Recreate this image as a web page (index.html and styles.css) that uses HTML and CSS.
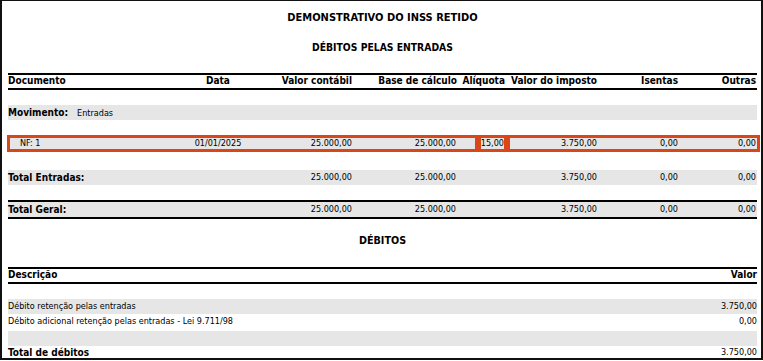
FILE: index.html
```html
<!DOCTYPE html>
<html>
  <head>
    <title>Demonstrativo do INSS Retido</title>
    <link rel="stylesheet" href="styles.css">
  </head>
  <body>
    <div class="report">
      <div class="title">DEMONSTRATIVO DO INSS RETIDO</div>
      <div class="subtitle">DÉBITOS PELAS ENTRADAS</div>

      <!-- column headers -->
      <div class="head-row">
        <span>Documento</span>
        <span class="c">Data</span>
        <span class="r">Valor contábil</span>
        <span class="r">Base de cálculo</span>
        <span class="r">Alíquota</span>
        <span class="r">Valor do imposto</span>
        <span class="r">Isentas</span>
        <span class="r">Outras</span>
      </div>

      <div class="band movimento">
        <b>Movimento:</b><span class="sub">Entradas</span>
      </div>

      <!-- document line, split in highlighted groups -->
      <div class="nf-row">
        <div class="nf-group g1">
          <span class="nf-doc">NF: 1</span>
          <span class="c">01/01/2025</span>
          <span class="r">25.000,00</span>
          <span class="r">25.000,00</span>
          <span></span>
        </div>
        <div class="nf-group g2">
          <span class="r">15,00</span>
        </div>
        <div class="nf-group g3">
          <span class="r">3.750,00</span>
          <span class="r">0,00</span>
          <span class="r">0,00</span>
        </div>
      </div>

      <div class="band data-row total-entradas">
        <b>Total Entradas:</b>
        <span></span>
        <span class="r">25.000,00</span>
        <span class="r">25.000,00</span>
        <span></span>
        <span class="r">3.750,00</span>
        <span class="r">0,00</span>
        <span class="r">0,00</span>
      </div>

      <div class="band data-row total-geral">
        <b>Total Geral:</b>
        <span></span>
        <span class="r">25.000,00</span>
        <span class="r">25.000,00</span>
        <span></span>
        <span class="r">3.750,00</span>
        <span class="r">0,00</span>
        <span class="r">0,00</span>
      </div>

      <div class="section">DÉBITOS</div>

      <div class="head-row debit-head">
        <span>Descrição</span>
        <span>Valor</span>
      </div>

      <div class="debit band first">
        <span>Débito retenção pelas entradas</span>
        <span>3.750,00</span>
      </div>
      <div class="debit">
        <span>Débito adicional retenção pelas entradas - Lei 9.711/98</span>
        <span>0,00</span>
      </div>
      <div class="debit band empty"></div>
      <div class="debit total">
        <b>Total de débitos</b>
        <span>3.750,00</span>
      </div>
    </div>
  </body>
</html>
```

FILE: styles.css
```css
html, body {
    margin: 0;
    padding: 0;
    background: #fff;
}

body {
    font-family: "DejaVu Sans Condensed", "DejaVu Sans", sans-serif;
    font-size: 9px;
    color: #000;
}

.report {
    width: 763px;
    height: 360px;
    box-sizing: border-box;
    border: 2px solid #111;
    border-top-width: 1px;
    padding: 0 4px 0 6px;
    overflow: hidden;
}

b {
    font-weight: bold;
    font-size: 10px;
}

.title, .subtitle, .section {
    text-align: center;
    font-weight: bold;
}
.title {
    height: 33px;
    line-height: 33px;
    font-size: 11px;
}
.subtitle {
    height: 28px;
    line-height: 26px;
    font-size: 10.3px;
}
.section {
    font-size: 10.7px;
}

/* header rows: thick rule above and below */
.head-row {
    display: grid;
    grid-template-columns: 170px 80px 94px 105px 48px 92px 81px 78px;
    margin-top: 11px;
    border-top: 2px solid #000;
    border-bottom: 2px solid #000;
    height: 13px;
    line-height: 12px;
    font-size: 10px;
    font-weight: bold;
    white-space: nowrap;
}

.c { text-align: center; }
.r { text-align: right; }

.band {
    background: #e6e6e6;
}

.movimento {
    margin-top: 15px;
    height: 15px;
    line-height: 15px;
}
.movimento .sub {
    margin-left: 9px;
}

.data-row {
    display: grid;
    grid-template-columns: 170px 80px 94px 104px 49px 92px 81px 78px;
    height: 15px;
    line-height: 15px;
    white-space: nowrap;
}

/* NF line with orange frames around the value groups */
.nf-row {
    display: flex;
    margin: 15px -3px 0 -1px;
    height: 17px;
}
.nf-group {
    box-sizing: border-box;
    height: 17px;
    border: 3px solid #d9461a;
    background: #e6e6e6;
    line-height: 11px;
    white-space: nowrap;
}
.g1 {
    width: 471px;
    display: grid;
    grid-template-columns: 168px 80px 94px 104px 19px;
}
.g1 .nf-doc {
    padding-left: 10px;
}
.g2 {
    width: 29px;
    display: flex;
    justify-content: flex-end;
}
.g3 {
    width: 253px;
    display: grid;
    grid-template-columns: 87px 81px 78px 1px;
}

.total-entradas {
    margin-top: 18px;
}
.total-geral {
    margin-top: 15px;
    border-top: 2px solid #000;
    border-bottom: 2px solid #000;
}

.section {
    height: 42px;
    line-height: 42px;
    margin-top: 1px;
}

.debit-head {
    display: flex;
    justify-content: space-between;
    margin-top: 5px;
}

.debit {
    display: flex;
    justify-content: space-between;
    height: 15px;
    line-height: 15px;
    white-space: nowrap;
}
.debit.first {
    margin-top: 15px;
}
.debit.empty {
    margin-top: 2px;
}
.debit.total {
    height: 13px;
    line-height: 13px;
}
```
